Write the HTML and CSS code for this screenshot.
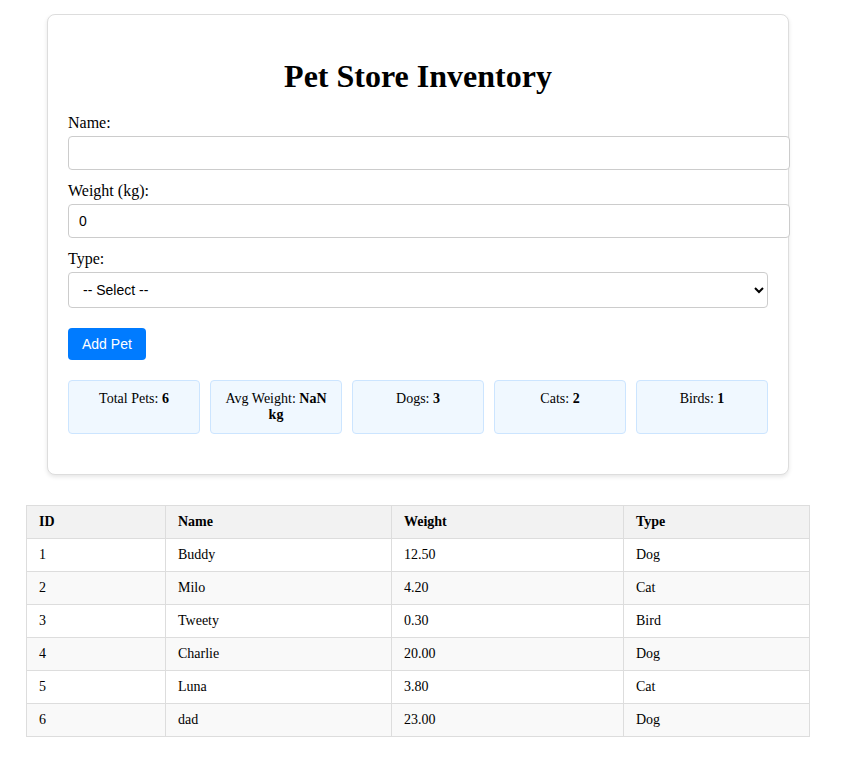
FILE: index.html
```html
<!DOCTYPE html>
<html>
<head>
<meta charset="utf-8">
<title>Pet Store Inventory</title>
<link rel="stylesheet" href="styles.css">
</head>
<body>
<div class="container">
  <h1 class="title">Pet Store Inventory</h1>
  <label class="field-label" for="name">Name:</label>
  <input class="text-input" id="name" type="text">
  <label class="field-label" for="weight">Weight (kg):</label>
  <input class="text-input" id="weight" type="number" value="0">
  <label class="field-label" for="type">Type:</label>
  <select class="select-input" id="type">
    <option>-- Select --</option>
    <option>Dog</option>
    <option>Cat</option>
    <option>Bird</option>
  </select>
  <button class="add-btn" type="button">Add Pet</button>
  <div class="stats">
    <div class="stat-card">Total Pets: <b>6</b></div>
    <div class="stat-card">Avg Weight: <b>NaN kg</b></div>
    <div class="stat-card">Dogs: <b>3</b></div>
    <div class="stat-card">Cats: <b>2</b></div>
    <div class="stat-card">Birds: <b>1</b></div>
  </div>
</div>
<table class="pet-table">
  <colgroup>
    <col class="c-id"><col class="c-name"><col class="c-weight"><col class="c-type">
  </colgroup>
  <thead>
    <tr><th>ID</th><th>Name</th><th>Weight</th><th>Type</th></tr>
  </thead>
  <tbody>
    <tr><td>1</td><td>Buddy</td><td>12.50</td><td>Dog</td></tr>
    <tr><td>2</td><td>Milo</td><td>4.20</td><td>Cat</td></tr>
    <tr><td>3</td><td>Tweety</td><td>0.30</td><td>Bird</td></tr>
    <tr><td>4</td><td>Charlie</td><td>20.00</td><td>Dog</td></tr>
    <tr><td>5</td><td>Luna</td><td>3.80</td><td>Cat</td></tr>
    <tr><td>6</td><td>dad</td><td>23.00</td><td>Dog</td></tr>
  </tbody>
</table>
</body>
</html>
```
FILE: styles.css
```css
html, body {
  background: #fff;
}
body {
  margin: 14px 16px 0 8px;
  font-family: "Liberation Serif", "Times New Roman", serif;
  font-size: 16px;
  color: #000;
}
.container {
  max-width: 700px;
  margin: 0 auto;
  padding: 20px;
  border: 1px solid #ddd;
  border-radius: 8px;
  box-shadow: 0 2px 4px rgba(0, 0, 0, 0.1);
  background: #fff;
}
.title {
  text-align: center;
  font-size: 32px;
  margin: 23px 0 19px;
  line-height: 37px;
}
.field-label {
  display: block;
  line-height: 18px;
  margin-bottom: 4px;
}
.text-input {
  display: block;
  width: 100%;
  margin: 0 0 12px;
  padding: 8px 10px;
  border: 1px solid #ccc;
  border-radius: 4px;
  font-family: "Liberation Sans", Arial, sans-serif;
  font-size: 14px;
  line-height: 16px;
  box-sizing: content-box;
  height: 16px;
}
.select-input {
  display: block;
  width: 100%;
  height: 36px;
  margin: 0 0 20px;
  padding: 8px 10px;
  border: 1px solid #ccc;
  border-radius: 4px;
  font-family: "Liberation Sans", Arial, sans-serif;
  font-size: 14px;
  background: #fff;
  color: #000;
}
.add-btn {
  display: block;
  height: 32px;
  padding: 0 14px;
  background: #007bff;
  color: #fff;
  border: none;
  border-radius: 4px;
  font-family: "Liberation Sans", Arial, sans-serif;
  font-size: 14px;
}
.stats {
  display: flex;
  gap: 10px;
  margin: 20px 0 20px;
}
.stat-card {
  flex: 1;
  padding: 10px;
  background: #f0f8ff;
  border: 1px solid #cce5ff;
  border-radius: 4px;
  text-align: center;
  font-size: 14px;
  line-height: 16px;
}
.pet-table {
  width: calc(100% - 37px);
  margin: 30px 18px 0;
  border-collapse: collapse;
  table-layout: fixed;
  font-size: 14px;
}
.c-id { width: 139px; }
.c-name { width: 226px; }
.c-weight { width: 232px; }
.c-type { width: 186px; }
.pet-table th,
.pet-table td {
  border: 1px solid #ddd;
  padding: 8px 12px;
  line-height: 16px;
  text-align: left;
}
.pet-table th {
  background: #f2f2f2;
  font-weight: bold;
}
.pet-table tbody tr:nth-child(even) td {
  background: #f9f9f9;
}
```
